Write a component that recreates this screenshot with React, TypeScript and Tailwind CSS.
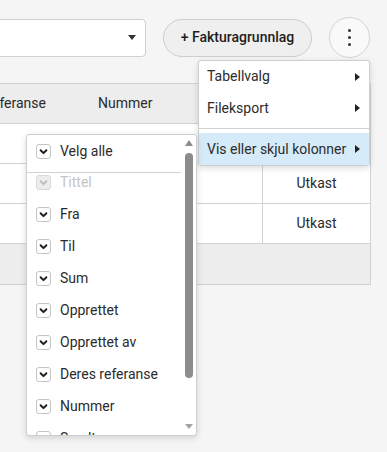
import React from "react";

const Check = ({ disabled }: { disabled?: boolean }) => (
  <span
    className={`flex h-[15px] w-[15px] shrink-0 items-center justify-center rounded-[3px] border ${
      disabled ? "border-[#d8d8d8] bg-[#ededed]" : "border-[#c4c4c4] bg-white"
    }`}
  >
    <svg viewBox="0 0 10 10" className="h-[9px] w-[9px]">
      <path
        d="M1.8 3.6l3.2 3.2 3.2-3.2"
        fill="none"
        stroke={disabled ? "#bdbdbd" : "#1f1f1f"}
        strokeWidth="2.2"
        strokeLinecap="round"
        strokeLinejoin="round"
      />
    </svg>
  </span>
);

const Caret = () => (
  <span className="h-0 w-0 border-y-[4px] border-l-[5px] border-y-transparent border-l-[#222]" />
);

const columns = [
  { name: "Tittel", disabled: true },
  { name: "Fra" },
  { name: "Til" },
  { name: "Sum" },
  { name: "Opprettet" },
  { name: "Opprettet av" },
  { name: "Deres referanse" },
  { name: "Nummer" },
  { name: "Sendt" },
];

export default function App() {
  return (
    <div className="relative h-[452px] w-[387px] overflow-hidden bg-[#f5f5f5] pt-[17px] font-['Roboto',sans-serif] text-[14px] text-[#2b2b2b]">
      {/* toolbar */}
      <div className="flex h-[41px] items-center gap-[17px]">
        <div className="-ml-[20px] flex h-[38px] w-[166px] items-center justify-end rounded-[4px] border border-[#d0d0d0] bg-white pr-[9px]">
          <span className="h-0 w-0 border-x-[4px] border-t-[5px] border-x-transparent border-t-[#333]" />
        </div>
        <button className="flex h-[38px] w-[149px] items-center justify-center rounded-full border border-[#cdcdcd] bg-[#efefef] font-medium text-[#1e1e1e]">
          + Fakturagrunnlag
        </button>
        <button className="flex h-[41px] w-[41px] flex-col items-center justify-center gap-[4px] rounded-full border border-[#d4d4d4] bg-[#f9f9f9]">
          <span className="h-[3px] w-[3px] rounded-full bg-[#333]" />
          <span className="h-[3px] w-[3px] rounded-full bg-[#333]" />
          <span className="h-[3px] w-[3px] rounded-full bg-[#333]" />
        </button>
      </div>

      {/* table */}
      <div className="-ml-[60px] mt-[25px] w-[431px] border-r border-[#d2d2d2]">
        <div className="grid h-[41px] grid-cols-[148px_174px_108px] items-center border-y border-[#d2d2d2] bg-[#ededed]">
          <span className="pl-[8px]">Deres referanse</span>
          <span className="pl-[10px]">Nummer</span>
          <span />
        </div>
        {["", "Utkast", "Utkast"].map((s, i) => (
          <div
            key={i}
            className="grid h-[40px] grid-cols-[148px_174px_108px] border-b border-[#d2d2d2] bg-white"
          >
            <span />
            <span />
            <span className="flex items-center justify-center border-l border-[#d2d2d2]">{s}</span>
          </div>
        ))}
        <div className="h-[41px] border-b border-[#d2d2d2] bg-[#ededed]" />
      </div>

      {/* main menu */}
      <div className="absolute left-[198px] top-[60px] w-[172px] rounded-[3px] border border-[#cfcfcf] bg-white shadow-[0_2px_6px_rgba(0,0,0,0.15)]">
        <div className="flex h-[31px] items-center justify-between pl-[8px] pr-[9px]">
          <span>Tabellvalg</span>
          <Caret />
        </div>
        <div className="flex h-[32px] items-center justify-between pl-[8px] pr-[9px]">
          <span>Fileksport</span>
          <Caret />
        </div>
        <div className="my-[4px] border-t border-[#d2d2d2]" />
        <div className="flex h-[32px] items-center justify-between bg-[#d6ebfa] pl-[8px] pr-[9px]">
          <span>Vis eller skjul kolonner</span>
          <Caret />
        </div>
      </div>

      {/* column submenu */}
      <div className="absolute left-[26px] top-[134px] flex h-[302px] w-[171px] overflow-hidden rounded-[3px] border border-[#cfcfcf] bg-white shadow-[0_2px_6px_rgba(0,0,0,0.15)]">
        <div className="flex w-[156px] flex-col">
          <div className="flex h-[32px] shrink-0 items-center gap-[9px] pl-[9px]">
            <Check />
            <span>Velg alle</span>
          </div>
          <div className="mt-[5px] shrink-0 border-t border-[#d2d2d2]" />
          <div className="-mt-[7px]">
            {columns.map((c) => (
              <div key={c.name} className="flex h-[32px] items-center gap-[9px] pl-[9px]">
                <Check disabled={c.disabled} />
                <span className={c.disabled ? "text-[#c4c4c4]" : ""}>{c.name}</span>
              </div>
            ))}
          </div>
        </div>
        <div className="flex w-[15px] flex-col items-center pt-[5px]">
          <span className="h-0 w-0 border-x-[4px] border-b-[6px] border-x-transparent border-b-[#8c8c8c]" />
          <span className="mt-[7px] h-[225px] w-[8px] rounded-full bg-[#8c8c8c]" />
          <span className="mt-[46px] h-0 w-0 border-x-[4px] border-t-[5px] border-x-transparent border-t-[#a3a3a3]" />
        </div>
      </div>
    </div>
  );
}
